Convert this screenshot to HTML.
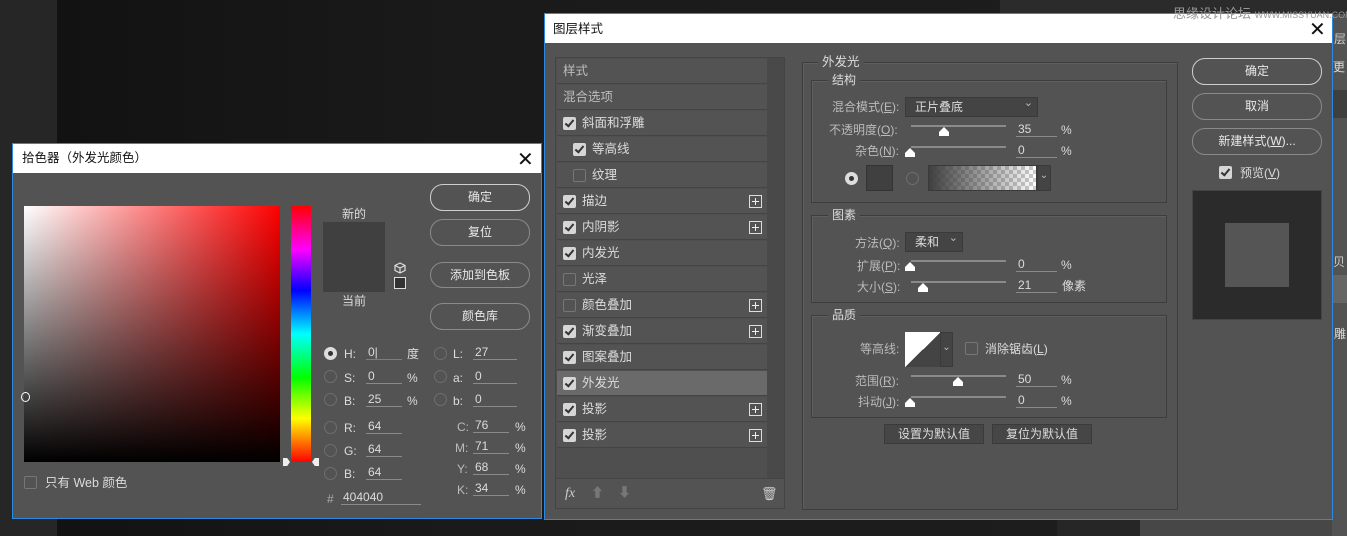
<!DOCTYPE html>
<html><head><meta charset="utf-8"><style>
*{margin:0;padding:0;box-sizing:border-box}
body{width:1347px;height:536px;overflow:hidden;background:#262626;position:relative;font-family:"Liberation Sans","Noto Sans CJK SC",sans-serif;font-size:12px;color:#dcdcdc}
.a{position:absolute}
.t{position:absolute;white-space:nowrap;line-height:14px}
.btn{position:absolute;border:1px solid #8a8a8a;border-radius:13px;text-align:center;color:#e8e8e8;font-size:12px}
.btn.p{border:1.5px solid #cfcfcf}
.cb{position:absolute;width:13px;height:13px;background:#d6d6d6;border-radius:2px}
.cb:after{content:"";position:absolute;left:4px;top:1px;width:3px;height:7px;border:solid #333;border-width:0 2px 2px 0;transform:rotate(40deg)}
.ucb{position:absolute;width:13px;height:13px;border:1px solid #767676;border-radius:2px}
.row{position:absolute;left:557px;width:210px;height:25px;background:#535353;border-bottom:1px solid #444}
.row span{position:absolute;top:5px;font-size:12.5px;line-height:15px;white-space:nowrap}
.plus{position:absolute;left:192px;top:6px;width:13px;height:13px;border:1px solid #ddd}
.plus:before{content:"";position:absolute;left:2px;top:5px;width:7px;height:1px;background:#eee}
.plus:after{content:"";position:absolute;left:5px;top:2px;width:1px;height:7px;background:#eee}
.rad{position:absolute;width:13px;height:13px;border:1px solid #6e6e6e;border-radius:50%}
.rad.on{background:#ddd;border-color:#ddd}
.rad.on:after{content:"";position:absolute;left:3px;top:3px;width:5px;height:5px;border-radius:50%;background:#333}
.inp{position:absolute;border-bottom:1px solid #8a8a8a;height:14px;line-height:13px;padding-left:2px}
.trk{position:absolute;height:2px;background:#8a8a8a;width:95px;left:911px}
.thm{position:absolute;width:10px;height:9px;background:#fff;clip-path:polygon(50% 0,100% 55%,100% 100%,0 100%,0 55%)}
.box{position:absolute;border:1px solid #3d3d3d;box-shadow:inset 1px 1px 0 #5f5f5f}
.lbl{position:absolute;background:#535353;padding:0 4px;line-height:14px}
.dd{position:absolute;background:#444;border:1px solid #3a3a3a;line-height:18px;padding-left:9px}
.dd:after{content:"⌄";position:absolute;right:4px;top:-4px;font-size:11px;color:#bbb}
</style></head><body>
<div class="a" style="left:57px;top:0;width:1000px;height:536px;background:linear-gradient(90deg,#121212,#1a1a1a 40%,#1d1d1d)"></div>
<div class="a" style="left:1000px;top:0;width:347px;height:14px;background:#2b2b2b"></div>
<div class="a" style="left:1140px;top:519px;width:207px;height:17px;background:#474747"></div>
<div class="a" style="left:1332px;top:14px;width:15px;height:522px;background:#535353"></div>
<div class="a" style="left:1332px;top:90px;width:15px;height:28px;background:#3f3f3f"></div>
<div class="a" style="left:1332px;top:275px;width:15px;height:28px;background:#666"></div>
<div class="t" style="left:1334px;top:32px;font-size:12px;color:#ccc">层</div>
<div class="t" style="left:1333px;top:60px;font-size:12px;color:#ddd">更</div>
<div class="t" style="left:1333px;top:255px;font-size:12px;color:#ccc">贝</div>
<div class="t" style="left:1334px;top:327px;font-size:12px;color:#ddd">雕</div>

<!-- Layer style dialog -->
<div class="a" style="left:544px;top:13px;width:789px;height:507px;background:#535353;border:1px solid #2a8ae0"></div>
<div class="a" style="left:545px;top:14px;width:787px;height:29px;background:#fff"></div>
<div class="t" style="left:553px;top:22px;color:#111;font-size:12.5px">图层样式</div>
<div class="t" style="left:1309px;top:19px;color:#111;font-size:20px;line-height:22px">✕</div>

<div class="a" style="left:555px;top:57px;width:230px;height:452px;border:1px solid #444;background:#4f4f4f"></div>
<div class="a" style="left:767px;top:58px;width:17px;height:420px;background:#494949"></div>
<div class="row" style="top:59px"><span style="left:6px;color:#bdbdbd">样式</span></div>
<div class="row" style="top:85px"><span style="left:6px;color:#bdbdbd">混合选项</span></div>
<div class="row" style="top:111px"><div class="cb" style="left:6px;top:6px"></div><span style="left:25px">斜面和浮雕</span></div>
<div class="row" style="top:137px"><div class="cb" style="left:16px;top:6px"></div><span style="left:35px">等高线</span></div>
<div class="row" style="top:163px"><div class="ucb" style="left:16px;top:6px"></div><span style="left:35px">纹理</span></div>
<div class="row" style="top:189px"><div class="cb" style="left:6px;top:6px"></div><span style="left:25px">描边</span><div class="plus"></div></div>
<div class="row" style="top:215px"><div class="cb" style="left:6px;top:6px"></div><span style="left:25px">内阴影</span><div class="plus"></div></div>
<div class="row" style="top:241px"><div class="cb" style="left:6px;top:6px"></div><span style="left:25px">内发光</span></div>
<div class="row" style="top:267px"><div class="ucb" style="left:6px;top:6px"></div><span style="left:25px">光泽</span></div>
<div class="row" style="top:293px"><div class="ucb" style="left:6px;top:6px"></div><span style="left:25px">颜色叠加</span><div class="plus"></div></div>
<div class="row" style="top:319px"><div class="cb" style="left:6px;top:6px"></div><span style="left:25px">渐变叠加</span><div class="plus"></div></div>
<div class="row" style="top:345px"><div class="cb" style="left:6px;top:6px"></div><span style="left:25px">图案叠加</span></div>
<div class="row" style="top:371px;background:#6a6a6a"><div class="cb" style="left:6px;top:6px"></div><span style="left:25px">外发光</span></div>
<div class="row" style="top:397px"><div class="cb" style="left:6px;top:6px"></div><span style="left:25px">投影</span><div class="plus"></div></div>
<div class="row" style="top:423px"><div class="cb" style="left:6px;top:6px"></div><span style="left:25px">投影</span><div class="plus"></div></div>
<div class="a" style="left:556px;top:478px;width:228px;height:30px;background:#535353;border-top:1px solid #444"></div>
<div class="t" style="left:565px;top:487px;font-style:italic;font-family:'Liberation Serif',serif;font-size:14px;color:#ccc">fx</div>
<div class="t" style="left:591px;top:486px;color:#777;font-size:13px">⬆</div>
<div class="t" style="left:618px;top:486px;color:#777;font-size:13px">⬇</div>
<div class="t" style="left:761px;top:487px;color:#ccc;font-size:13px">🗑</div>

<div class="box" style="left:802px;top:62px;width:376px;height:448px"></div>
<div class="lbl" style="left:818px;top:55px;font-size:12.5px">外发光</div>
<div class="box" style="left:811px;top:80px;width:356px;height:123px"></div>
<div class="lbl" style="left:828px;top:73px">结构</div>
<div class="t" style="left:832px;top:100px;color:#bbb">混合模式(<u>E</u>):</div>
<div class="dd" style="left:905px;top:97px;width:133px;height:20px">正片叠底</div>
<div class="t" style="left:829px;top:123px;color:#bbb">不透明度(<u>O</u>):</div>
<div class="trk" style="top:125px"></div><div class="thm" style="left:939px;top:127px"></div>
<div class="inp" style="left:1016px;top:123px;width:41px">35</div><div class="t" style="left:1061px;top:123px">%</div>
<div class="t" style="left:855px;top:144px;color:#bbb">杂色(<u>N</u>):</div>
<div class="trk" style="top:146px"></div><div class="thm" style="left:905px;top:148px"></div>
<div class="inp" style="left:1016px;top:144px;width:41px">0</div><div class="t" style="left:1061px;top:144px">%</div>
<div class="rad on" style="left:845px;top:172px"></div>
<div class="a" style="left:866px;top:165px;width:27px;height:26px;background:#404040;border:1px solid #333"></div>
<div class="rad" style="left:906px;top:172px"></div>
<div class="a" style="left:928px;top:165px;width:109px;height:26px;border:1px solid #3a3a3a;background:linear-gradient(90deg,rgba(64,64,64,1),rgba(64,64,64,0)),repeating-conic-gradient(#ccc 0 25%,#fff 0 50%) 0 0/8px 8px"></div>
<div class="a" style="left:1037px;top:165px;width:14px;height:26px;background:#444;border:1px solid #3a3a3a;color:#bbb;font-size:10px;text-align:center;line-height:20px">⌄</div>

<div class="box" style="left:811px;top:215px;width:356px;height:88px"></div>
<div class="lbl" style="left:828px;top:208px">图素</div>
<div class="t" style="left:855px;top:236px;color:#bbb">方法(<u>Q</u>):</div>
<div class="dd" style="left:905px;top:232px;width:58px;height:20px">柔和</div>
<div class="t" style="left:857px;top:259px;color:#bbb">扩展(<u>P</u>):</div>
<div class="trk" style="top:260px"></div><div class="thm" style="left:905px;top:262px"></div>
<div class="inp" style="left:1016px;top:258px;width:41px">0</div><div class="t" style="left:1061px;top:258px">%</div>
<div class="t" style="left:857px;top:280px;color:#bbb">大小(<u>S</u>):</div>
<div class="trk" style="top:281px"></div><div class="thm" style="left:918px;top:283px"></div>
<div class="inp" style="left:1016px;top:279px;width:41px">21</div><div class="t" style="left:1062px;top:279px">像素</div>

<div class="box" style="left:811px;top:315px;width:356px;height:103px"></div>
<div class="lbl" style="left:828px;top:308px">品质</div>
<div class="t" style="left:860px;top:342px;color:#bbb">等高线:</div>
<div class="a" style="left:905px;top:332px;width:36px;height:35px;background:linear-gradient(to top left,#444 50%,#fff 50%)"></div>
<div class="a" style="left:940px;top:332px;width:13px;height:35px;background:#444;border:1px solid #3a3a3a;color:#bbb;font-size:10px;text-align:center;line-height:30px">⌄</div>
<div class="ucb" style="left:965px;top:342px"></div>
<div class="t" style="left:985px;top:342px">消除锯齿(<u>L</u>)</div>
<div class="t" style="left:855px;top:374px;color:#bbb">范围(<u>R</u>):</div>
<div class="trk" style="top:375px"></div><div class="thm" style="left:953px;top:377px"></div>
<div class="inp" style="left:1016px;top:373px;width:41px">50</div><div class="t" style="left:1061px;top:373px">%</div>
<div class="t" style="left:858px;top:395px;color:#bbb">抖动(<u>J</u>):</div>
<div class="trk" style="top:396px"></div><div class="thm" style="left:905px;top:398px"></div>
<div class="inp" style="left:1016px;top:394px;width:41px">0</div><div class="t" style="left:1061px;top:394px">%</div>
<div class="a" style="left:884px;top:424px;width:100px;height:20px;background:#464646;border:1px solid #3a3a3a;text-align:center;line-height:18px">设置为默认值</div>
<div class="a" style="left:992px;top:424px;width:100px;height:20px;background:#464646;border:1px solid #3a3a3a;text-align:center;line-height:18px">复位为默认值</div>

<div class="btn p" style="left:1192px;top:58px;width:130px;height:27px;line-height:24px">确定</div>
<div class="btn" style="left:1192px;top:93px;width:130px;height:27px;line-height:25px">取消</div>
<div class="btn" style="left:1192px;top:128px;width:130px;height:27px;line-height:25px">新建样式(<u>W</u>)...</div>
<div class="cb" style="left:1219px;top:166px"></div>
<div class="t" style="left:1240px;top:166px">预览(<u>V</u>)</div>
<div class="a" style="left:1192px;top:190px;width:130px;height:130px;background:#2b2b2b;border:1px solid #444"></div>
<div class="a" style="left:1225px;top:223px;width:64px;height:64px;background:#555"></div>

<!-- Color picker dialog -->
<div class="a" style="left:12px;top:143px;width:530px;height:376px;background:#535353;border:1px solid #2a8ae0"></div>
<div class="a" style="left:13px;top:144px;width:528px;height:29px;background:#fff"></div>
<div class="t" style="left:22px;top:151px;color:#111;font-size:12.5px">拾色器（外发光颜色）</div>
<div class="t" style="left:517px;top:149px;color:#111;font-size:20px;line-height:22px">✕</div>
<div class="a" style="left:24px;top:206px;width:256px;height:256px;background:linear-gradient(to top,#000,rgba(0,0,0,0)),linear-gradient(to right,#fff,#f00)"></div>
<div class="a" style="left:21px;top:392px;width:9px;height:10px;border:1px solid #fff;border-radius:50%"></div>
<div class="a" style="left:291px;top:206px;width:20px;height:256px;background:linear-gradient(to bottom,#f00,#f0f 17%,#00f 33%,#0ff 50%,#0f0 67%,#ff0 83%,#f00)"></div>
<div class="a" style="left:283px;top:458px;width:7px;height:8px;background:#eee;clip-path:polygon(0 0,60% 0,100% 50%,60% 100%,0 100%)"></div>
<div class="a" style="left:312px;top:458px;width:7px;height:8px;background:#eee;clip-path:polygon(40% 0,100% 0,100% 100%,40% 100%,0 50%)"></div>
<div class="t" style="left:342px;top:207px">新的</div>
<div class="a" style="left:323px;top:222px;width:62px;height:70px;background:#404040"></div>
<div class="t" style="left:342px;top:294px">当前</div>
<svg class="a" style="left:394px;top:262px" width="12" height="12" viewBox="0 0 12 12"><path d="M6 1L11 3.5V8.5L6 11L1 8.5V3.5Z M1 3.5L6 6L11 3.5 M6 6V11" fill="none" stroke="#ddd" stroke-width="1.2"/></svg>
<div class="a" style="left:394px;top:277px;width:12px;height:12px;border:1px solid #ddd;background:#333"></div>
<div class="btn p" style="left:430px;top:184px;width:100px;height:27px;line-height:24px">确定</div>
<div class="btn" style="left:430px;top:219px;width:100px;height:27px;line-height:25px">复位</div>
<div class="btn" style="left:430px;top:262px;width:100px;height:26px;line-height:24px">添加到色板</div>
<div class="btn" style="left:430px;top:303px;width:100px;height:27px;line-height:25px">颜色库</div>

<div class="rad on" style="left:324px;top:347px"></div><div class="t" style="left:344px;top:347px">H:</div>
<div class="inp" style="left:366px;top:346px;width:36px;border-color:#3c8de0">0|</div><div class="t" style="left:407px;top:347px">度</div>
<div class="rad" style="left:324px;top:370px"></div><div class="t" style="left:344px;top:371px">S:</div>
<div class="inp" style="left:366px;top:370px;width:36px">0</div><div class="t" style="left:407px;top:371px">%</div>
<div class="rad" style="left:324px;top:393px"></div><div class="t" style="left:344px;top:394px">B:</div>
<div class="inp" style="left:366px;top:393px;width:36px">25</div><div class="t" style="left:407px;top:394px">%</div>
<div class="rad" style="left:324px;top:421px"></div><div class="t" style="left:344px;top:421px">R:</div>
<div class="inp" style="left:366px;top:420px;width:36px">64</div>
<div class="rad" style="left:324px;top:444px"></div><div class="t" style="left:344px;top:444px">G:</div>
<div class="inp" style="left:366px;top:443px;width:36px">64</div>
<div class="rad" style="left:324px;top:467px"></div><div class="t" style="left:344px;top:467px">B:</div>
<div class="inp" style="left:366px;top:466px;width:36px">64</div>
<div class="t" style="left:327px;top:492px;color:#aaa">#</div>
<div class="inp" style="left:341px;top:491px;width:80px">404040</div>

<div class="rad" style="left:434px;top:347px"></div><div class="t" style="left:453px;top:347px">L:</div>
<div class="inp" style="left:473px;top:346px;width:44px">27</div>
<div class="rad" style="left:434px;top:370px"></div><div class="t" style="left:453px;top:371px">a:</div>
<div class="inp" style="left:473px;top:370px;width:44px">0</div>
<div class="rad" style="left:434px;top:393px"></div><div class="t" style="left:453px;top:394px">b:</div>
<div class="inp" style="left:473px;top:393px;width:44px">0</div>
<div class="t" style="left:457px;top:420px;color:#bbb">C:</div><div class="inp" style="left:473px;top:419px;width:36px">76</div><div class="t" style="left:515px;top:420px">%</div>
<div class="t" style="left:455px;top:441px;color:#bbb">M:</div><div class="inp" style="left:473px;top:440px;width:36px">71</div><div class="t" style="left:515px;top:441px">%</div>
<div class="t" style="left:457px;top:462px;color:#bbb">Y:</div><div class="inp" style="left:473px;top:461px;width:36px">68</div><div class="t" style="left:515px;top:462px">%</div>
<div class="t" style="left:457px;top:483px;color:#bbb">K:</div><div class="inp" style="left:473px;top:482px;width:36px">34</div><div class="t" style="left:515px;top:483px">%</div>

<div class="ucb" style="left:24px;top:476px"></div>
<div class="t" style="left:45px;top:476px;font-size:12.5px">只有 Web 颜色</div>

<div class="t" style="left:1173px;top:7px;font-size:13px;color:#999">思缘设计论坛 <span style="font-size:9px">WWW.MISSYUAN.COM</span></div>
</body></html>
